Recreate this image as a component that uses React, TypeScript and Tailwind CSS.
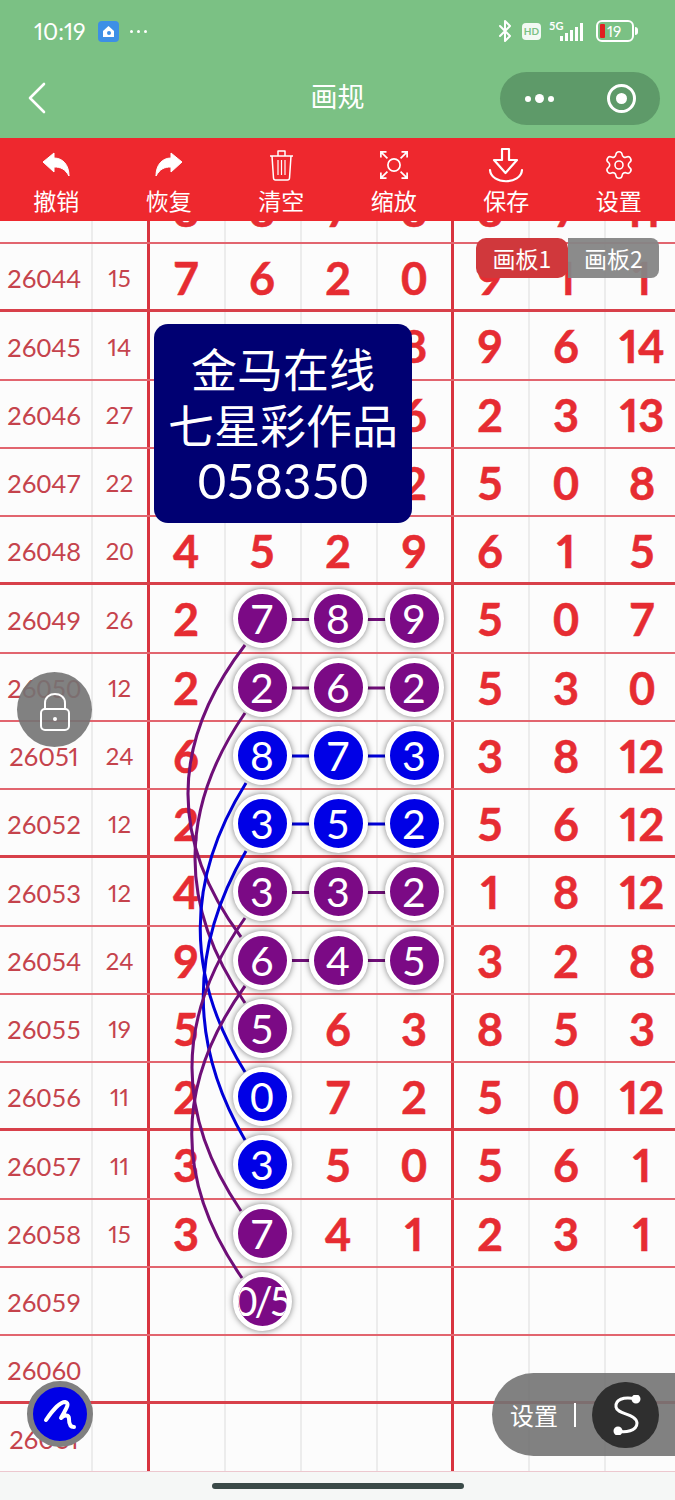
import React from "react";
import { Bluetooth, Settings } from "lucide-react";

const LATIN = "font-['Lato','Noto_Sans_CJK_SC',sans-serif]";
const nums = (s: string) => (s.includes("1") ? "proportional-nums" : "");

type Ball = { v: string; c: "p" | "b" };
type Row = { id: string; sum?: string; d: (string | Ball | null)[]; thick?: boolean };
const p = (v: string): Ball => ({ v, c: "p" });
const b = (v: string): Ball => ({ v, c: "b" });

const rows: Row[] = [
  { id: "26043", sum: "", d: ["8", "8", "7", "8", "8", "7", "11"] },
  { id: "26044", sum: "15", d: ["7", "6", "2", "0", "9", "1", "1"], thick: true },
  { id: "26045", sum: "14", d: ["5", "1", "3", "8", "9", "6", "14"] },
  { id: "26046", sum: "27", d: ["9", "4", "8", "6", "2", "3", "13"] },
  { id: "26047", sum: "22", d: ["3", "7", "0", "2", "5", "0", "8"] },
  { id: "26048", sum: "20", d: ["4", "5", "2", "9", "6", "1", "5"], thick: true },
  { id: "26049", sum: "26", d: ["2", p("7"), p("8"), p("9"), "5", "0", "7"] },
  { id: "26050", sum: "12", d: ["2", p("2"), p("6"), p("2"), "5", "3", "0"] },
  { id: "26051", sum: "24", d: ["6", b("8"), b("7"), b("3"), "3", "8", "12"] },
  { id: "26052", sum: "12", d: ["2", b("3"), b("5"), b("2"), "5", "6", "12"], thick: true },
  { id: "26053", sum: "12", d: ["4", p("3"), p("3"), p("2"), "1", "8", "12"] },
  { id: "26054", sum: "24", d: ["9", p("6"), p("4"), p("5"), "3", "2", "8"] },
  { id: "26055", sum: "19", d: ["5", p("5"), "6", "3", "8", "5", "3"] },
  { id: "26056", sum: "11", d: ["2", b("0"), "7", "2", "5", "0", "12"], thick: true },
  { id: "26057", sum: "11", d: ["3", b("3"), "5", "0", "5", "6", "1"] },
  { id: "26058", sum: "15", d: ["3", p("7"), "4", "1", "2", "3", "1"] },
  { id: "26059", sum: "", d: [null, p("0/5"), null, null, null, null, null] },
  { id: "26060", sum: "", d: [null, null, null, null, null, null, null], thick: true },
  { id: "26061", sum: "", d: [null, null, null, null, null, null, null] },
];

const curves = [
  { d: "M245 645 Q133 791 241 937", c: "#6f0f78" },
  { d: "M245 713 Q145 858 245 1003", c: "#6f0f78" },
  { d: "M246 783 Q155 928 245 1072", c: "#0000d8" },
  { d: "M246 851 Q161 996 245 1140", c: "#0000d8" },
  { d: "M245 918 Q141 1065 241 1211", c: "#6f0f78" },
  { d: "M245 986 Q140 1132 242 1278", c: "#6f0f78" },
];

const links = [
  { y: 619.5, c: "#6f0f78" },
  { y: 688, c: "#6f0f78" },
  { y: 756, c: "#0000d8" },
  { y: 824, c: "#0000d8" },
  { y: 892.5, c: "#6f0f78" },
  { y: 960.5, c: "#6f0f78" },
];

function UndoIcon({ flip }: { flip?: boolean }) {
  return (
    <svg width="30" height="26" viewBox="0 0 30 26" className={flip ? "-scale-x-100" : ""}>
      <path
        d="M2 10 L13 1 V6 C22 6 28 13 28 24 C24 17 20 15 13 15 V20 Z"
        fill="#fff"
        stroke="#fff"
        strokeWidth="1"
        strokeLinejoin="round"
      />
    </svg>
  );
}

function TrashIcon() {
  return (
    <svg width="25" height="32" viewBox="0 0 25 32" fill="none" stroke="#fff" strokeWidth="1.5" strokeLinejoin="round">
      <path d="M1 7 H24 M9 7 V2 H16 V7" />
      <path d="M3 7 L4.5 29 C4.6 30.4 5.4 31 6.5 31 H18.5 C19.6 31 20.4 30.4 20.5 29 L22 7" />
      <path d="M9 11 V26 M12.5 11 V26 M16 11 V26" strokeWidth="1.2" />
    </svg>
  );
}

function ScanIcon() {
  return (
    <svg width="30" height="30" viewBox="0 0 32 32" fill="none" stroke="#fff" strokeWidth="1.8">
      <circle cx="16" cy="16" r="6.5" />
      <path d="M2 8 V2 H8 M3 3 L9 9 M30 8 V2 H24 M29 3 L23 9 M2 24 V30 H8 M3 29 L9 23 M30 24 V30 H24 M29 29 L23 23" />
    </svg>
  );
}

function SaveIcon() {
  return (
    <svg width="36" height="36" viewBox="0 0 36 36" fill="none" stroke="#fff" strokeWidth="2.2" strokeLinejoin="round" strokeLinecap="round">
      <path d="M14 2 H21 V13 H29 L17.5 26 L6 13 H14 Z" />
      <path d="M2 23 C3 38 33 38 34 23" />
    </svg>
  );
}

function Toolbar() {
  const items = [
    { t: "撤销", i: <UndoIcon /> },
    { t: "恢复", i: <UndoIcon flip /> },
    { t: "清空", i: <TrashIcon /> },
    { t: "缩放", i: <ScanIcon /> },
    { t: "保存", i: <SaveIcon /> },
    { t: "设置", i: <Settings size={32} strokeWidth={1.2} color="#fff" /> },
  ];
  return (
    <div className="flex h-[83px] bg-[#ee282e]">
      {items.map((x) => (
        <div key={x.t} className="flex w-[112.5px] flex-col items-center">
          <div className="flex h-[49px] items-center pt-[4px]">{x.i}</div>
          <div className="text-[23px] leading-[27px] text-white font-['Noto_Sans_CJK_SC',sans-serif]">{x.t}</div>
        </div>
      ))}
    </div>
  );
}

function StatusBar() {
  return (
    <div className="flex h-[62px] items-center justify-between pl-[34px] pr-[37px] text-white">
      <div className="flex items-center">
        <span className={`text-[23px] proportional-nums ${LATIN}`}>10:19</span>
        <span className="ml-[12px] flex h-[21px] w-[21px] items-center justify-center rounded-[4px] bg-[#3d8fe6]">
          <svg width="13" height="13" viewBox="0 0 13 13">
            <path d="M6.5 1 L12 6 V12 H1 V6 Z" fill="#fff" />
            <circle cx="7" cy="8" r="2" fill="#3d8fe6" />
          </svg>
        </span>
        <span className="ml-[11px] flex gap-[4px]">
          <i className="h-[3px] w-[3px] rounded-full bg-white" />
          <i className="h-[3px] w-[3px] rounded-full bg-white" />
          <i className="h-[3px] w-[3px] rounded-full bg-white" />
        </span>
      </div>
      <div className="flex items-center">
        <Bluetooth size={24} strokeWidth={2} color="#fff" />
        <span className={`ml-[5px] flex h-[17px] w-[19px] items-center justify-center rounded-[4px] bg-white/90 text-[10px] font-bold text-[#7bc184] ${LATIN}`}>HD</span>
        <svg width="38" height="24" viewBox="0 0 38 24" className="ml-[8px]">
          <text x="0" y="11" fontSize="11" fontWeight="700" fill="#fff" fontFamily="Lato">5G</text>
          <rect x="11" y="17" width="3" height="5" fill="#fff" />
          <rect x="16" y="14" width="3" height="8" fill="#fff" />
          <rect x="21" y="11" width="3" height="11" fill="#fff" />
          <rect x="26" y="8" width="3" height="14" fill="#fff" />
          <rect x="31" y="4" width="3" height="18" fill="#fff" />
        </svg>
        <span className="ml-[9px] flex h-[22px] w-[38px] items-center rounded-[6px] border-2 border-white pl-[2px]">
          <i className="h-[14px] w-[5px] rounded-[1px] bg-[#e02020]" />
          <span className={`ml-[2px] text-[15px] leading-none proportional-nums ${LATIN}`}>19</span>
        </span>
        <i className="ml-[1px] h-[8px] w-[3px] rounded-r bg-white" />
      </div>
    </div>
  );
}

function NavBar() {
  return (
    <div className="relative flex h-[76px] items-start justify-between pl-[27px] pr-[15px] pt-[10px]">
      <svg width="20" height="32" viewBox="0 0 20 32" fill="none" stroke="#fff" strokeWidth="2.6" strokeLinecap="round" strokeLinejoin="round" className="mt-[10px]">
        <path d="M17 2 L3 16 L17 30" />
      </svg>
      <div className="flex h-[53px] w-[160px] items-center justify-between rounded-full bg-[#5e9a69] pl-[25px] pr-[24px]">
        <span className="flex items-center gap-[4px]">
          <i className="h-[6px] w-[6px] rounded-full bg-white" />
          <i className="h-[9px] w-[9px] rounded-full bg-white" />
          <i className="h-[6px] w-[6px] rounded-full bg-white" />
        </span>
        <span className="flex h-[29px] w-[29px] items-center justify-center rounded-full border-[3px] border-white">
          <i className="h-[11px] w-[11px] rounded-full bg-white" />
        </span>
      </div>
      <div className="absolute left-0 right-0 top-[15px] text-center text-[27px] leading-[38px] text-white font-['Noto_Sans_CJK_SC',sans-serif]">画规</div>
    </div>
  );
}

function BallView({ ball }: { ball: Ball }) {
  const bg = ball.c === "p" ? "bg-[#7b0a85]" : "bg-[#0000e6]";
  const long = ball.v.length > 1;
  return (
    <div className={`relative z-20 flex h-[59px] w-[59px] items-center justify-center overflow-hidden rounded-full border-[5px] border-white shadow-[0_0_6px_rgba(0,0,0,0.5)] ${bg}`}>
      <span className={`whitespace-nowrap font-normal leading-none text-white ${long ? "text-[40px] tracking-[-3px]" : "text-[41px]"}`}>{ball.v}</span>
    </div>
  );
}

const GREY = "shadow-[inset_2px_0_0_#ececec]";
const RED = "shadow-[inset_2px_0_0_#d8343f]";
const GREY_BEFORE_RED = "shadow-[inset_2px_0_0_#ececec,inset_-1px_0_0_#d8343f]";
const cellLine = [RED, GREY, GREY, GREY_BEFORE_RED, RED, GREY, GREY];

function DataRow({ row, first, last }: { row: Row; first: boolean; last: boolean }) {
  const border = last
    ? "border-b-[2px] border-[#ecc8cf]"
    : row.thick
      ? "border-b-[3px] border-[#d8404a]"
      : "border-b-[2px] border-[#e2656f]";
  return (
    <div className={`flex h-[68.25px] w-[680px] box-border ${border} ${first ? "mt-[-45.2px]" : ""}`}>
      <div className={`flex w-[91px] items-center justify-center pr-[3px] pt-[3px] text-[25.5px] text-[#c5434c] ${nums(row.id)}`}>{row.id}</div>
      <div className={`flex w-[57px] items-center justify-center pt-[3px] text-[24px] text-[#c5434c] shadow-[inset_2px_0_0_#ececec,inset_-1px_0_0_#d8343f] ${nums(row.sum ?? "")}`}>{row.sum}</div>
      {row.d.map((v, i) => (
        <div key={i} className={`flex w-[76px] items-center justify-center ${typeof v === "string" ? "pt-[3px]" : "pt-[1px]"} ${cellLine[i]}`}>
          {v === null ? null : typeof v === "string" ? (
            <span className={`text-[45px] font-bold leading-none text-[#e62c32] [-webkit-text-stroke:0.5px_#e62c32] ${nums(v)}`}>{v}</span>
          ) : (
            <BallView ball={v} />
          )}
        </div>
      ))}
    </div>
  );
}

export default function App() {
  return (
    <div className={`relative h-[1500px] w-[675px] overflow-hidden bg-[#f5f7f6] ${LATIN}`}>
      <div className="bg-[#7bc184]">
        <StatusBar />
        <NavBar />
      </div>
      <Toolbar />

      <div className="relative h-[1251px] overflow-hidden bg-[#fcfcfc]">
        {rows.map((r, i) => (
          <DataRow key={r.id} row={r} first={i === 0} last={i === rows.length - 1} />
        ))}

        <svg className="pointer-events-none absolute left-0 top-0 z-10" width="675" height="1251" viewBox="0 221 675 1251" fill="none">
          {curves.map((c, i) => (
            <path key={i} d={c.d} stroke={c.c} strokeWidth="3" />
          ))}
          {links.map((l, i) => (
            <path key={i} d={`M285 ${l.y} H440`} stroke={l.c} strokeWidth="3" />
          ))}
        </svg>

        <div className="absolute left-[154px] top-[103px] z-30 flex h-[199px] w-[258px] flex-col items-center justify-center rounded-[14px] bg-[#000072] text-[46px] leading-[56.5px] text-white font-['Noto_Sans_CJK_SC',sans-serif]">
          <div>金马在线</div>
          <div>七星彩作品</div>
          <div className={`text-[49px] ${LATIN}`}>058350</div>
        </div>

        <div className="absolute left-[476px] top-[17px] z-30 flex h-[40px] w-[183px] text-[23px] text-white font-['Noto_Sans_CJK_SC',sans-serif]">
          <div className="flex w-[92px] items-center justify-center rounded-[10px] bg-[#d0383c]">画板1</div>
          <div className="flex w-[91px] items-center justify-center rounded-r-[8px] bg-[#858585]/95">画板2</div>
        </div>
      </div>

      <div className="absolute left-[17px] top-[672px] z-40 flex h-[75px] w-[75px] items-center justify-center rounded-full bg-[#737373]/90">
        <svg width="30" height="40" viewBox="0 0 30 40" fill="none" stroke="#fff" strokeWidth="2" className="mt-[5px]">
          <path d="M5 17 V11 C5 -1 25 -1 25 11 V17" />
          <rect x="1" y="17" width="28" height="21" rx="4" />
          <circle cx="15" cy="27" r="2" fill="#fff" stroke="none" />
        </svg>
      </div>

      <div className="absolute left-[27px] top-[1381px] z-40 flex h-[66px] w-[66px] items-center justify-center rounded-full border-[6px] border-[#808080] bg-[#0000e6]">
        <svg width="34" height="36" viewBox="0 0 34 36" fill="none" stroke="#fff" strokeWidth="4" strokeLinecap="round" strokeLinejoin="round">
          <path d="M3 24 C9 15 17 6 22 6 C28 7 22 14 18 22 C22 18 26 19 26 23 C26 27 27 31 31 31" />
        </svg>
      </div>

      <div className="absolute left-[492px] top-[1373px] z-40 flex h-[83px] w-[183px] items-center rounded-l-[42px] bg-[#737373]/90 pl-[18px]">
        <span className="text-[24px] leading-none text-white font-['Noto_Sans_CJK_SC',sans-serif]">设置</span>
        <i className="ml-[16px] h-[24px] w-[2px] bg-white" />
        <div className="ml-[16px] flex h-[66px] w-[67px] items-center justify-center rounded-full bg-[#2f2f2f]">
          <svg width="30" height="40" viewBox="0 0 30 40" fill="none" stroke="#fff" strokeWidth="3" strokeLinecap="round">
            <path d="M25 4 C12 1 4 5 5 12 C6 20 25 18 26 28 C26 36 14 38 7 36" />
            <circle cx="25" cy="4" r="3" fill="#fff" />
            <circle cx="7" cy="36" r="3" fill="#fff" />
          </svg>
        </div>
      </div>

      <div className="flex h-[28px] items-center justify-center">
        <i className="h-[6px] w-[252px] rounded-full bg-[#3a4a48]" />
      </div>
    </div>
  );
}
